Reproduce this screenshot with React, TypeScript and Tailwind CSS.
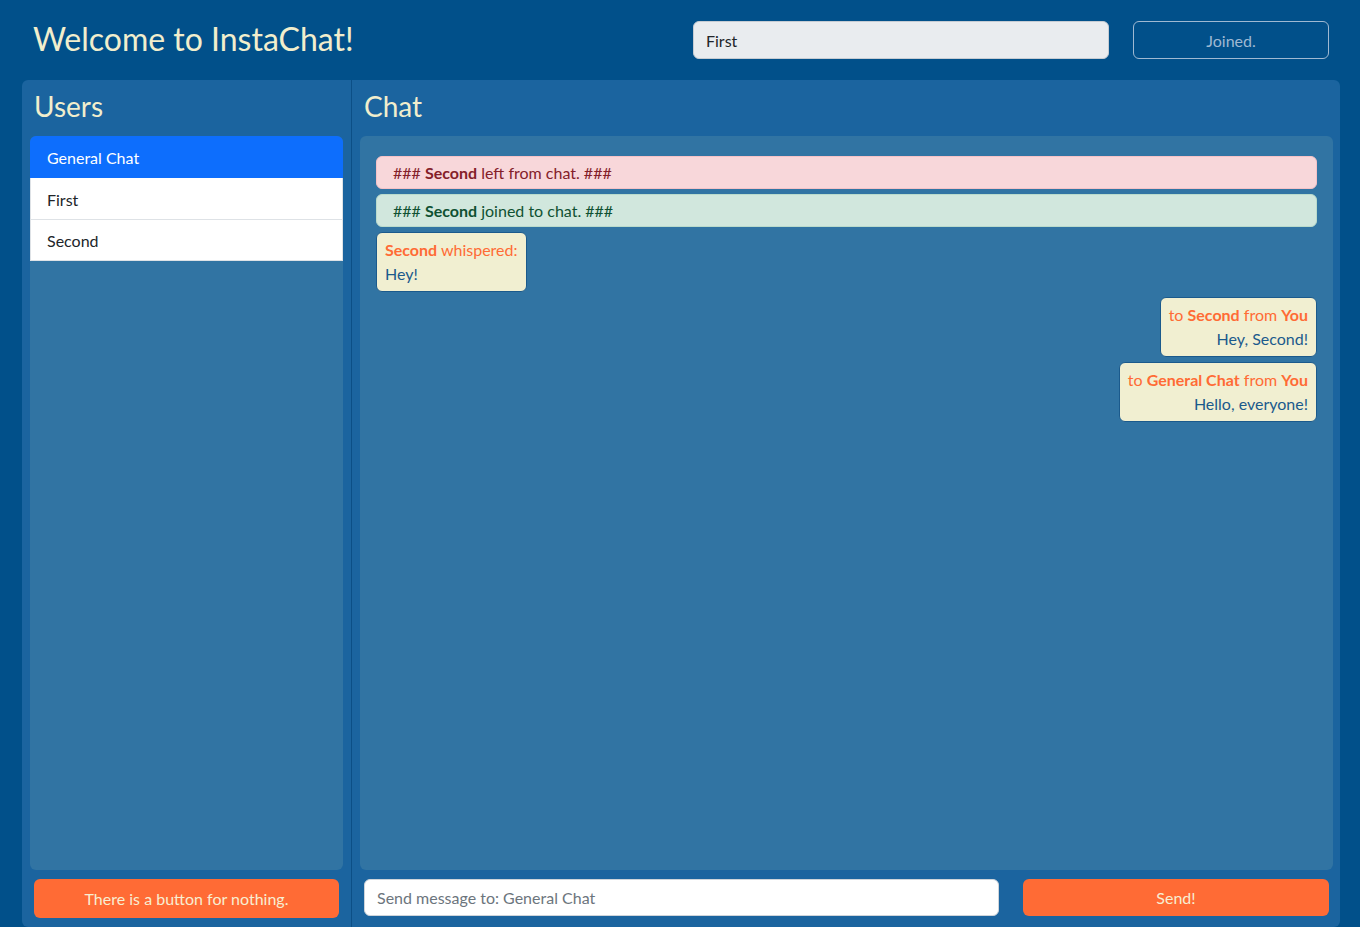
export default function App() {
  return (
    <div className="h-[927px] w-[1360px] overflow-hidden bg-[#01508a] font-['Lato','Liberation_Sans',sans-serif] text-[16px] text-[#212529]">
      {/* Header */}
      <div className="flex h-[80px] items-center pl-[33px]">
        <h1 className="-mt-[2px] w-[660px] text-[32px] leading-[38px] font-normal text-[#f1eecd]">
          Welcome to InstaChat!
        </h1>
        <div className="flex h-[38px] w-[416px] items-center rounded-md border border-[#c6ccd3] bg-[#e9ecef] px-3 pt-[1px] text-[#212529]">
          First
        </div>
        <button className="ml-[24px] h-[38px] w-[196px] rounded-md border border-[#9fb9d2] pt-[1px] text-[#9fb9d2]">
          Joined.
        </button>
      </div>

      {/* Main panel */}
      <div className="ml-[22px] flex h-[847px] w-[1318px] rounded-md bg-[#1b649f]">
        {/* Users column */}
        <div className="flex w-[330px] flex-col border-r border-[#0c4f86] px-[8px] pb-[9px]">
          <h2 className="flex h-[56px] items-center pb-[4px] pl-[4px] text-[28px] font-normal text-[#f1eecd]">
            Users
          </h2>
          <div className="flex-1 w-[313px] rounded-md bg-[#3174a3]">
            <div className="overflow-hidden rounded-t-md">
              <div className="h-[42px] bg-[#0d6efd] px-[17px] pt-[10px] leading-[24px] text-white">
                General Chat
              </div>
              <div className="h-[42px] border border-t-0 border-[#dee2e6] bg-white px-[16px] pt-[10px] leading-[24px]">
                First
              </div>
              <div className="h-[41px] border border-t-0 border-[#dee2e6] bg-white px-[16px] pt-[9px] leading-[24px]">
                Second
              </div>
            </div>
          </div>
          <button className="mx-[4px] mt-[9px] h-[39px] rounded-md bg-[#ff6b35] pt-[1px] text-[#f7eed2]">
            There is a button for nothing.
          </button>
        </div>

        {/* Chat column */}
        <div className="flex flex-1 flex-col pr-[7px] pb-[9px] pl-[8px]">
          <h2 className="flex h-[56px] items-center pb-[4px] pl-[4px] text-[28px] font-normal text-[#f1eecd]">
            Chat
          </h2>
          <div className="flex flex-1 flex-col gap-[5px] rounded-md bg-[#3174a3] px-[16px] pt-[20px]">
            <div className="h-[33px] rounded-md border border-[#f5c2c7] bg-[#f8d7da] px-[16px] pt-[4px] leading-[24px] text-[#842029]">
              ### <b>Second</b> left from chat. ###
            </div>
            <div className="h-[33px] rounded-md border border-[#badbcc] bg-[#d1e7dd] px-[16px] pt-[4px] leading-[24px] text-[#0f5132]">
              ### <b>Second</b> joined to chat. ###
            </div>
            <div className="self-start rounded-md border border-[#1b5a8c] bg-[#f1efd1] px-[8px] py-[5px] leading-[24px]">
              <div className="text-[#ff6b35]">
                <b>Second</b> whispered:
              </div>
              <div className="text-[#1b5a8c]">Hey!</div>
            </div>
            <div className="self-end rounded-md border border-[#1b5a8c] bg-[#f1efd1] px-[8px] py-[5px] text-right leading-[24px]">
              <div className="text-[#ff6b35]">
                to <b>Second</b> from <b>You</b>
              </div>
              <div className="text-[#1b5a8c]">Hey, Second!</div>
            </div>
            <div className="self-end rounded-md border border-[#1b5a8c] bg-[#f1efd1] px-[8px] py-[5px] text-right leading-[24px]">
              <div className="text-[#ff6b35]">
                to <b>General Chat</b> from <b>You</b>
              </div>
              <div className="text-[#1b5a8c]">Hello, everyone!</div>
            </div>
          </div>
          <div className="mt-[9px] flex h-[39px] items-start">
            <div className="ml-[4px] flex h-[37px] w-[635px] items-center rounded-md border border-[#ced4da] bg-white px-3 text-[#6c757d]">
              Send message to: General Chat
            </div>
            <button className="ml-[24px] h-[37px] w-[306px] rounded-md bg-[#ff6b35] text-[#f7eed2]">
              Send!
            </button>
          </div>
        </div>
      </div>
    </div>
  );
}
